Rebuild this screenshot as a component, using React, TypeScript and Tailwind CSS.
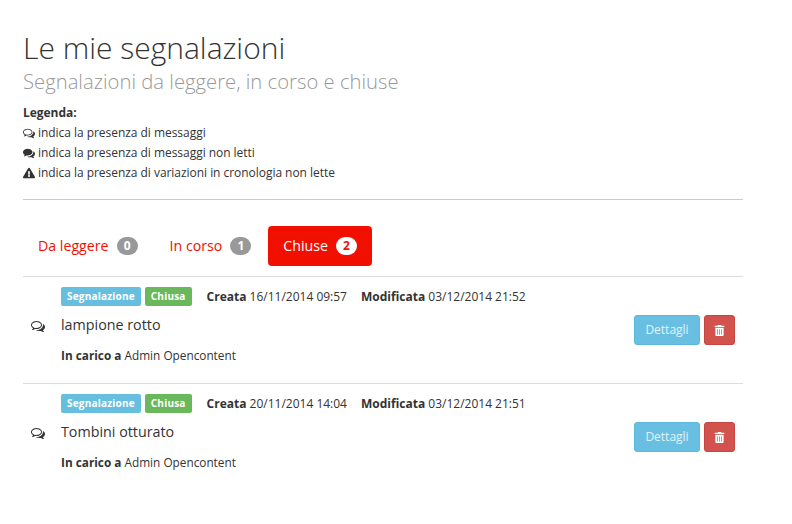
import React from 'react';
import { FaExclamationTriangle, FaTrashAlt } from 'react-icons/fa';

// font awesome 4 glyphs, the package only ships the 5 ones
const CommentsOutline = ({ size }: { size: number }) => (
  <svg width={size} height={size} viewBox="0 0 1792 1792" fill="currentColor">
    <path d="M704 384q-153 0-286 52t-212 141-79 191q0 82 53 158t149 132l97 56-35 84q34-20 62-39l44-31 53 10q78 14 154 14 153 0 286-52t212-141 79-191-79-191-212-141-286-52zm0-128q191 0 353.5 68.5t256.5 186.5 94 257-94 257-256.5 186.5-353.5 68.5q-86 0-176-16-124 88-278 128-36 9-86 16h-3q-11 0-20.5-8t-11.5-21q-1-3-1-6.5t.5-6.5 2-6l2.5-5 3.5-5.5 4-5 4.5-5 4-4.5q5-6 23-25t26-29.5 22.5-29 25-38.5 20.5-44q-124-72-195-177t-71-224q0-139 94-257t256.5-186.5 353.5-68.5zm822 1169q10 24 20.5 44t25 38.5 22.5 29 26 29.5 23 25q1 1 4 4.5t4.5 5 4 5 3.5 5.5l2.5 5 2 6 .5 6.5-1 6.5q-3 14-13 22t-22 7q-50-7-86-16-154-40-278-128-90 16-176 16-271 0-472-132 58 4 88 4 161 0 309-45t264-129q125-92 192-212t67-254q0-77-23-152 129 71 204 178t75 230q0 120-71 224.5t-195 176.5z" />
  </svg>
);

const CommentsSolid = ({ size }: { size: number }) => (
  <svg width={size} height={size} viewBox="0 0 1792 1792" fill="currentColor">
    <path d="M1408 768q0 139-94 257t-256.5 186.5-353.5 68.5q-86 0-176-16-124 88-278 128-36 9-86 16h-3q-11 0-20.5-8t-11.5-21q-1-3-1-6.5t.5-6.5 2-6l2.5-5 3.5-5.5 4-5 4.5-5 4-4.5q5-6 23-25t26-29.5 22.5-29 25-38.5 20.5-44q-124-72-195-177t-71-224q0-139 94-257t256.5-186.5 353.5-68.5 353.5 68.5 256.5 186.5 94 257zm384 256q0 120-71 224.5t-195 176.5q10 24 20.5 44t25 38.5 22.5 29 26 29.5 23 25q1 1 4 4.5t4.5 5 4 5 3.5 5.5l2.5 5 2 6 .5 6.5-1 6.5q-3 14-13 22t-22 7q-50-7-86-16-154-40-278-128-90 16-176 16-271 0-472-132 58 4 88 4 161 0 309-45t264-129q125-92 192-212t67-254q0-77-23-152 129 71 204 178t75 230z" />
  </svg>
);

const legend = [
  { id: 1, icon: <CommentsOutline size={12} />, text: 'indica la presenza di messaggi' },
  { id: 2, icon: <CommentsSolid size={12} />, text: 'indica la presenza di messaggi non letti' },
  { id: 3, icon: <FaExclamationTriangle size={12} />, text: 'indica la presenza di variazioni in cronologia non lette' },
];

const tabs = [
  { id: 1, name: 'Da leggere', count: 0, active: false },
  { id: 2, name: 'In corso', count: 1, active: false },
  { id: 3, name: 'Chiuse', count: 2, active: true },
];

const rows = [
  { id: 1, created: '16/11/2014 09:57', changed: '03/12/2014 21:52', title: 'lampione rotto' },
  { id: 2, created: '20/11/2014 14:04', changed: '03/12/2014 21:51', title: 'Tombini otturato' },
];

const App = () => {
  return (
    <div className="w-[792px] h-[524px] bg-white pl-[23px] pt-[28px] font-['Open_Sans',sans-serif] text-[#333] overflow-hidden">
      <div className="w-[720px]">
        <h1 className="text-[30px] leading-[40px] font-light text-[#333]">Le mie segnalazioni</h1>
        <h2 className="text-[20.25px] leading-[26px] font-light text-[#999]">Segnalazioni da leggere, in corso e chiuse</h2>
        <div className="mt-[9px] text-[12px] tracking-[-0.04px] leading-[20px] pb-[16px] border-b border-[#ccc]">
          <p className="font-bold">Legenda:</p>
          {legend.map((item) => (
            <div key={item.id} className="flex items-center gap-[3px]">
              {item.icon}
              <span>{item.text}</span>
            </div>
          ))}
        </div>
        <div className="flex mt-[26px] pb-[10px] border-b border-[#ddd] text-[14.2px] gap-[2px]">
          {tabs.map((tab) => (
            <div
              key={tab.id}
              className={`h-[40px] px-[15px] flex items-center gap-[8px] rounded-[4px] ${tab.active ? 'bg-[#f11000] text-white' : 'text-[#f11000]'}`}
            >
              <span>{tab.name}</span>
              <span className={`h-[18px] w-[21px] rounded-full flex items-center justify-center text-[12px] font-bold ${tab.active ? 'bg-white text-[#f11000]' : 'bg-[#999] text-white'}`}>
                {tab.count}
              </span>
            </div>
          ))}
        </div>
        {rows.map((row, i) => (
          <div key={row.id} className={`flex items-center h-[107px] pr-[8px] border-b ${i === 0 ? 'border-[#ddd]' : 'border-transparent'}`}>
            <div className="w-[38px] flex justify-center pr-[8px] pb-[9px]">
              <CommentsOutline size={14} />
            </div>
            <div className="flex-1 flex flex-col pb-[10px]">
              <div className="flex items-center text-[12px] h-[19px]">
                <span className="h-[19px] px-[6px] flex items-center rounded-[2px] bg-[#67bfe0] text-white font-bold text-[10px] tracking-[0.2px]">Segnalazione</span>
                <span className="h-[19px] px-[6px] ml-[4px] flex items-center rounded-[2px] bg-[#6ab85c] text-white font-bold text-[10px] tracking-[0.2px]">Chiusa</span>
                <span className="ml-[15px]"><b>Creata</b> {row.created}</span>
                <span className="ml-[14px]"><b>Modificata</b> {row.changed}</span>
              </div>
              <div className="text-[14.3px] leading-[20px] mt-[9px]">{row.title}</div>
              <div className="text-[11.8px] leading-[16px] mt-[12px]"><b>In carico a</b> Admin Opencontent</div>
            </div>
            <div className="flex gap-[4px]">
              <button className="w-[66px] h-[30px] rounded-[3px] bg-[#68bfe2] border border-[#5cb8dc] text-white/80 text-[12px]">Dettagli</button>
              <button className="w-[31px] h-[30px] rounded-[3px] bg-[#d2524d] border border-[#c94440] text-white flex items-center justify-center">
                <FaTrashAlt size={11} />
              </button>
            </div>
          </div>
        ))}
      </div>
    </div>
  );
};

export default App;
